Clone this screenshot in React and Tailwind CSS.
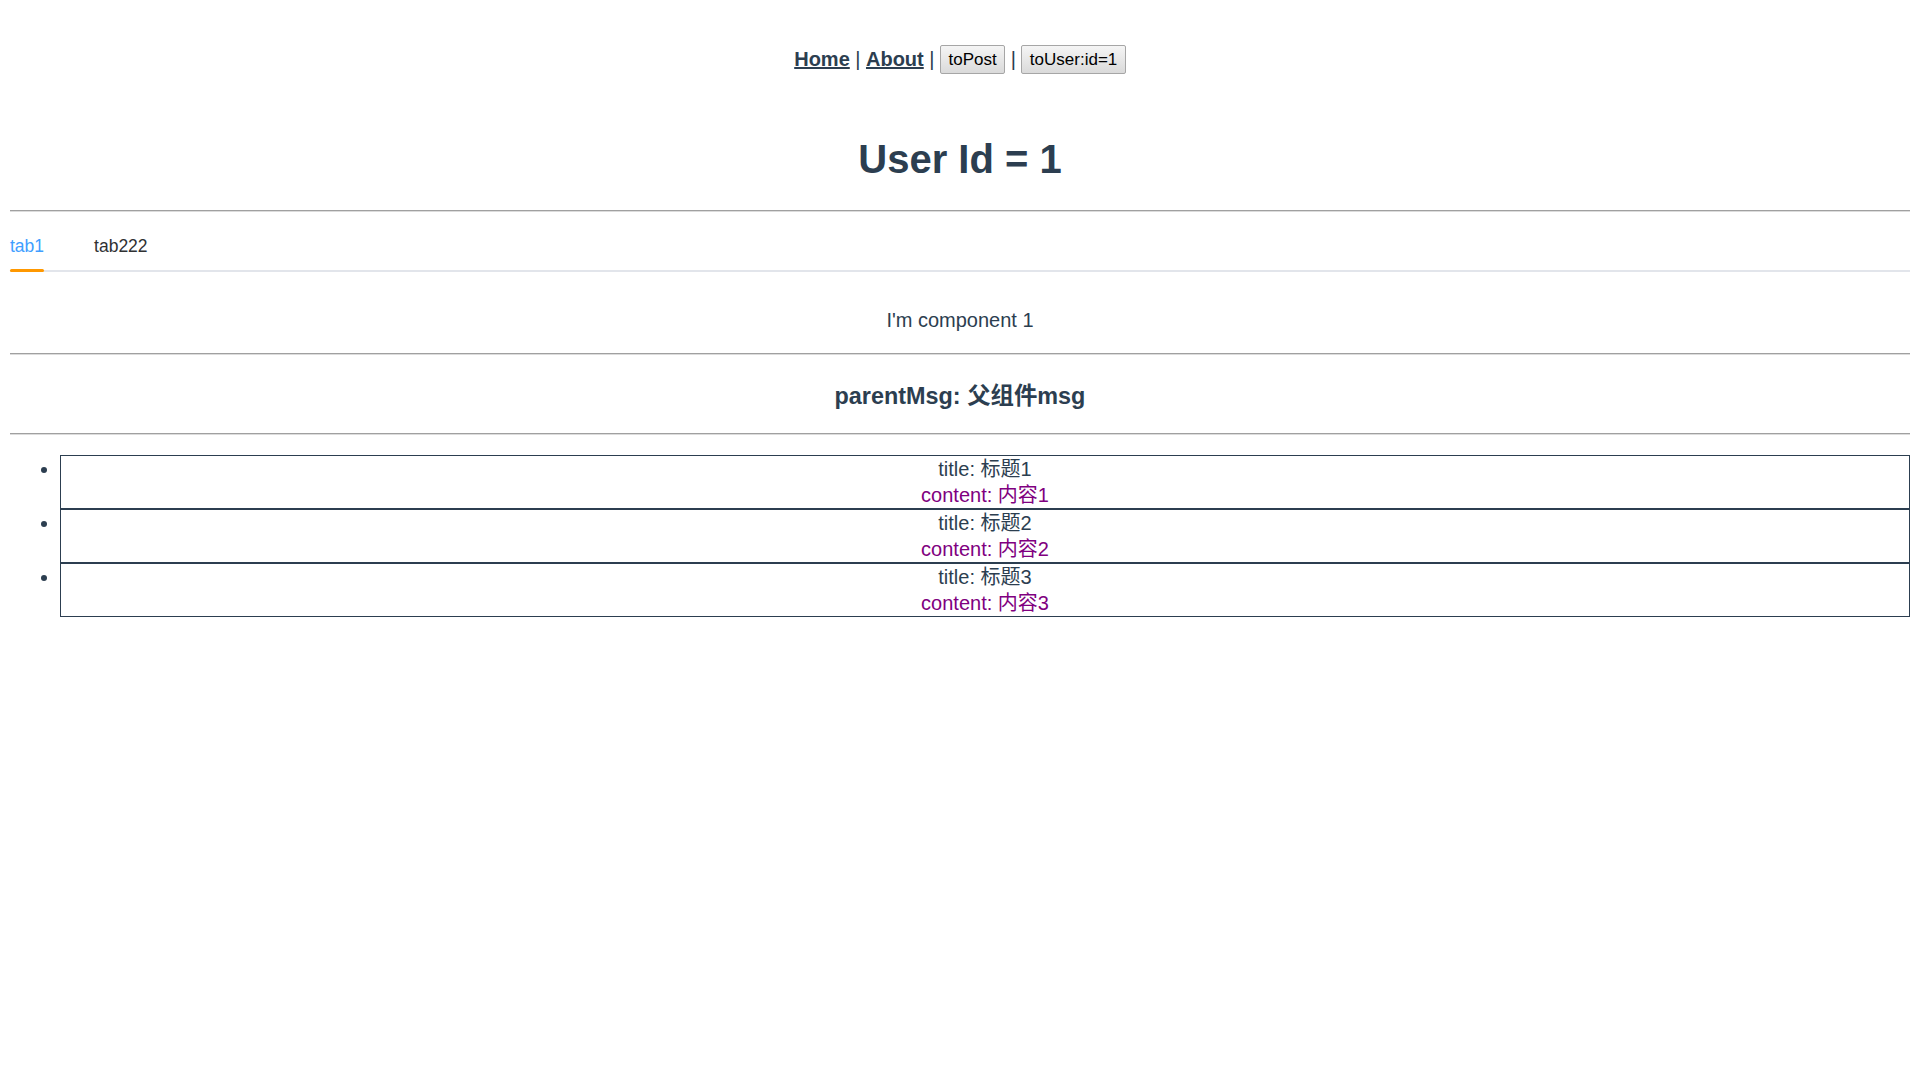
import React from "react";

const items = [
  { title: "标题1", content: "内容1" },
  { title: "标题2", content: "内容2" },
  { title: "标题3", content: "内容3" },
];

const Rule = () => <div className="h-[2px] border-t border-b border-t-[#a0a0a0] border-b-[#dcdcdc]" />;

const NavButton = ({ children }) => (
  <button className="h-[29px] rounded-[2px] border border-[#a6a6a6] bg-gradient-to-b from-[#f5f5f5] to-[#dadada] px-[7.5px] text-[17px] leading-[19px] text-black">
    {children}
  </button>
);

const Tabs = () => {
  const tabs = ["tab1", "tab222"];
  const active = 0;
  return (
    <div className="flex border-b-2 border-[#e2e5eb] text-left text-[17.5px] leading-[48px]">
      {tabs.map((t, i) => (
        <div key={t} className={i === 0 ? "pr-[25px]" : "px-[25px]"}>
          <span className={"relative inline-block " + (i === active ? "text-[#409eff]" : "text-[#303133]")}>
            {t}
            {i === active && <span className="absolute left-0 right-0 -bottom-[2px] h-[3px] rounded-full bg-[#ff9800]" />}
          </span>
        </div>
      ))}
    </div>
  );
};

export default function App() {
  return (
    <div className="m-[10px] text-center text-[#2c3e50] font-['Liberation_Sans','Noto_Sans_CJK_SC',sans-serif]">
      <div className="flex items-center justify-center gap-[5.5px] pt-[35px] pb-[37px] text-[20px] leading-[23px]">
        <a className="font-bold underline">Home</a>
        <span>|</span>
        <a className="font-bold underline">About</a>
        <span>|</span>
        <NavButton>toPost</NavButton>
        <span>|</span>
        <NavButton>toUser:id=1</NavButton>
      </div>

      <h1 className="mt-[25px] mb-[28px] text-[40px] font-bold leading-[46px]">User Id = 1</h1>
      <Rule />

      <div className="mt-[10px]">
        <Tabs />
        <div className="pt-[37px]">
          <p className="mb-[21px] text-[20px] leading-[23px]">I'm component 1</p>
        </div>
      </div>
      <Rule />

      <h3 className="mt-[28px] mb-[23px] text-[23.4px] font-bold leading-[27px]">parentMsg: 父组件msg</h3>
      <Rule />

      <ul className="mt-[20px] list-disc pl-[50px] text-[20px] leading-[26px]">
        {items.map((item) => (
          <li key={item.title} className="border border-[#2c3e50]">
            <div>title: {item.title}</div>
            <div className="text-[#800080]">content: {item.content}</div>
          </li>
        ))}
      </ul>
    </div>
  );
}
